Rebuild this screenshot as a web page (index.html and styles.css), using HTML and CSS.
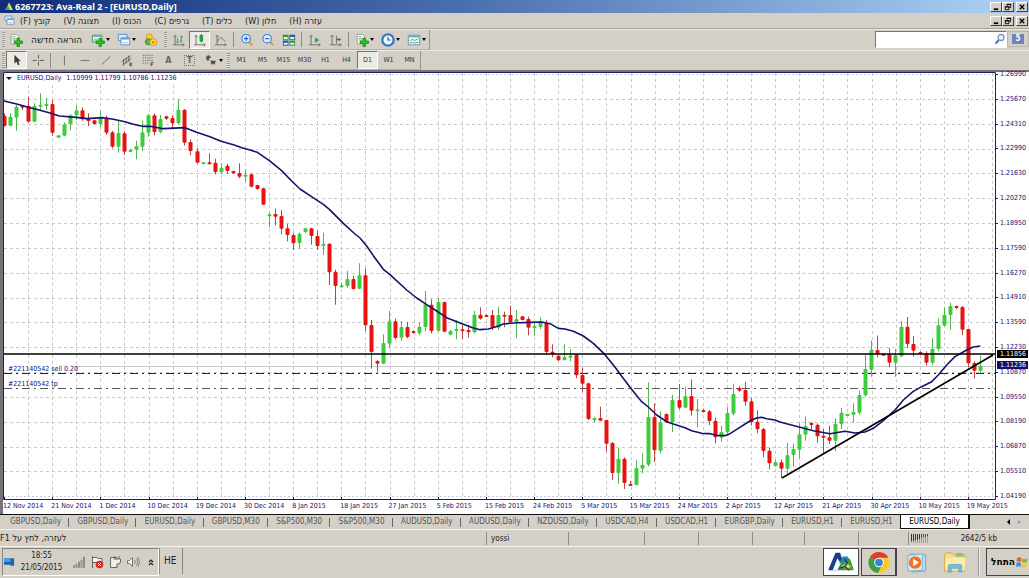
FILE: index.html
```html
<!DOCTYPE html>
<html lang="he">
<head>
<meta charset="utf-8">
<title>6267723: Ava-Real 2 - [EURUSD,Daily]</title>
<link rel="stylesheet" href="styles.css">
</head>
<body>
<svg class="defs" aria-hidden="true">
  <defs>
    <symbol id="plus" viewBox="0 0 8 8"><path d="M3 .5h2v2.500h2.500v2H5v2.500H3V5H.5V3H3z" fill="#2fc52f" stroke="#128a12" stroke-width=".7"/></symbol>
    <symbol id="i-new" viewBox="0 0 16 16"><path d="M2.500 1.500h6l2.500 2.500v8.500H2.500z" fill="#fff" stroke="#8a9a8a"/><path d="M4 4h3M4 6h5M4 8h4" stroke="#79a579"/><use href="#plus" x="5" y="5" width="11" height="11"/></symbol>
    <symbol id="i-chartplus" viewBox="0 0 16 16"><path d="M1.500 2.500h11v8h-11z" fill="#f2fff2" stroke="#3c8b50"/><path d="M2 3.500h10" stroke="#6fa8c8" stroke-width="2"/><path d="M3 7h5M3 9h4" stroke="#5bb06b"/><use href="#plus" x="5" y="5" width="11" height="11"/></symbol>
    <symbol id="i-windows" viewBox="0 0 16 16"><path d="M1.500 1.500h10v7h-10z" fill="#d8ecff" stroke="#4b88c2"/><path d="M4.500 5.500h10v8h-10z" fill="#fff" stroke="#4b88c2"/><path d="M5 6.500h9" stroke="#5fa4e0" stroke-width="2"/><path d="M6 11h7" stroke="#8ab6de"/></symbol>
    <symbol id="i-coins" viewBox="0 0 16 16"><circle cx="6" cy="4.500" r="3.500" fill="#f7d22c" stroke="#c49a10"/><circle cx="5" cy="10" r="3.500" fill="#59b24c" stroke="#358a32"/><circle cx="10.500" cy="10.500" r="4" fill="#fadb38" stroke="#c99d0c"/><circle cx="10.500" cy="10.500" r="1.500" fill="#c78f10"/></symbol>
    <symbol id="i-bars" viewBox="0 0 16 16"><path d="M3.500 3v10.500M1 13.500h13M2 4.500l1.500-2 1.500 2M12 12l2 1.500-2 1.500" fill="none" stroke="#686868"/><path d="M6.500 6v6M6.500 10.500H5M10.500 3v8M10.500 4.500h2M10.500 9.500H9" stroke="#23903a" fill="none"/></symbol>
    <symbol id="i-candle" viewBox="0 0 16 16"><path d="M3.500 3v10.500M1 13.500h13M2 4.500l1.500-2 1.500 2M12 12l2 1.500-2 1.500" fill="none" stroke="#686868"/><path d="M9.500 1v10" stroke="#118822"/><path d="M8 3h3v6H8z" fill="#1dbb39" stroke="#118822"/></symbol>
    <symbol id="i-line" viewBox="0 0 16 16"><path d="M3.500 3v10.500M1 13.500h13M2 4.500l1.500-2 1.500 2M12 12l2 1.500-2 1.500" fill="none" stroke="#686868"/><path d="M4 10c2-5 4-6 6-3l3 3" stroke="#23903a" fill="none"/></symbol>
    <symbol id="i-zoomin" viewBox="0 0 16 16"><path d="M10 10l4 4" stroke="#d3a22f" stroke-width="2.500"/><circle cx="7" cy="6.500" r="4.800" fill="#e3f1ff" stroke="#3c7fd0" stroke-width="1.300"/><path d="M7 4v5M4.500 6.500h5" stroke="#2263b8" stroke-width="1.300"/></symbol>
    <symbol id="i-zoomout" viewBox="0 0 16 16"><path d="M10 10l4 4" stroke="#d3a22f" stroke-width="2.500"/><circle cx="7" cy="6.500" r="4.800" fill="#e3f1ff" stroke="#3c7fd0" stroke-width="1.300"/><path d="M4.500 6.500h5" stroke="#2263b8" stroke-width="1.300"/></symbol>
    <symbol id="i-tile" viewBox="0 0 16 16"><path d="M1 2h6.500v6H1zM8.500 8.500H15v6H8.500z" fill="#2c9a35"/><path d="M8.500 2H15v6H8.500zM1 8.500h6.500v6H1z" fill="#2659a8"/><path d="M2 4.500h4.500V7H2zM9.500 4.500H14V7H9.500zM2 11h4.500v2.500H2zM9.500 11H14v2.500H9.500z" fill="#e4f4dd"/></symbol>
    <symbol id="i-scroll" viewBox="0 0 16 16"><path d="M3.500 3v10.500M1 13.500h13M2 4.500l1.500-2 1.500 2M12 12l2 1.500-2 1.500" fill="none" stroke="#686868"/><path d="M8 5l5 3-5 3z" fill="#26a53e"/></symbol>
    <symbol id="i-shift" viewBox="0 0 16 16"><path d="M3.500 3v10.500M1 13.500h13M2 4.500l1.500-2 1.500 2M12 12l2 1.500-2 1.500M8.500 3v9M9 7.500h5" fill="none" stroke="#686868"/><path d="M9 7.500l3-2v4z" fill="#555"/></symbol>
    <symbol id="i-clock" viewBox="0 0 16 16"><circle cx="8" cy="8" r="6.500" fill="#eef7ff" stroke="#2e78c6" stroke-width="2.600"/><path d="M8 4.500V8h3" fill="none" stroke="#234f8a" stroke-width="1.200"/></symbol>
    <symbol id="i-template" viewBox="0 0 16 16"><path d="M1.500 2.500h13v11h-13z" fill="#f3fff8" stroke="#558fa8"/><path d="M2 4h12" stroke="#68a9c6" stroke-width="2"/><path d="M3 8.500l3-1 3 1 4-2M3 11.500l3-1 3 1 4-1" fill="none" stroke="#3b9a67"/></symbol>
    <symbol id="i-arrow" viewBox="0 0 16 16"><path d="M5 2v10l2.500-2 1.500 4 2-1-1.500-3.500H12.500z" fill="#3d3d3d"/></symbol>
    <symbol id="i-cross" viewBox="0 0 16 16"><path d="M8.500 2v4.500M8.500 10v4.500M2 8.500h4.500M10 8.500h5" stroke="#555"/><path d="M8 8h1v1H8z" fill="#555"/></symbol>
    <symbol id="i-vline" viewBox="0 0 16 16"><path d="M8.500 3v11" stroke="#666"/></symbol>
    <symbol id="i-hline" viewBox="0 0 16 16"><path d="M3 8.500h10" stroke="#666"/></symbol>
    <symbol id="i-trend" viewBox="0 0 16 16"><path d="M3 13L13 4" stroke="#666"/></symbol>
    <symbol id="i-channel" viewBox="0 0 16 16"><path d="M2 10l10-7M3 14L13 6M4 7v7M7 5v7M10 3v7M11 11.500h3M11 14.500h3M11.500 11v4M11 13h2.500" stroke="#5c5c5c" fill="none"/></symbol>
    <symbol id="i-fibo" viewBox="0 0 16 16"><path d="M2 2.500h12M2 5.500h12M2 8.500h12M2 11.500h7" stroke="#666" stroke-dasharray="1.500 1"/><path d="M11.500 15v-4h3M11.500 13h2" stroke="#444" fill="none"/></symbol>
    <symbol id="i-arrows" viewBox="0 0 16 16"><path d="M2 5l3-2.500L8 5 6 5.500l-1 3-2-.500.500-2zM8 9h5l-1 4-1.500-1-2 1zM6 8l3 2" fill="#4e4e4e" stroke="#4e4e4e" stroke-width=".5"/></symbol>
    <symbol id="app" viewBox="0 0 10 9"><path d="M1 8L5 .5 9 8z" fill="#4da83d"/><path d="M5 .5L9 8H6L4 4z" fill="#e0d94a"/><path d="M1 8l2-3.500L5 8z" fill="#3b8fc9"/></symbol>
    <symbol id="ava" viewBox="0 0 30 24"><path d="M1 21L9 2h5l3 9-6 10z" fill="#1d3d86"/><path d="M6 21l5-13 4 6-4 7z" fill="#f6f8ff"/><path d="M11 21l8-15 6 3 4 12z" fill="#3f9a37"/><path d="M17 6l-4 8 6-2 5-3-2-3z" fill="#2586b0"/><path d="M15 17l6-4 5 4-4 3z" fill="#e2d742"/><path d="M19 9l3 4-3 4M13 19l6-2 5 4" fill="none" stroke="#183d7d" stroke-width="1.500"/></symbol>
  </defs>
</svg>

<header class="titlebar">
  <svg class="app-icon"><use href="#app"/></svg>
  <h1>6267723: Ava-Real 2 - [EURUSD,Daily]</h1>
  <div class="winbtns">
    <button aria-label="Minimize"><svg viewBox="0 0 11 9"><path d="M3 7h5" stroke="#000" stroke-width="2"/></svg></button>
    <button aria-label="Restore"><svg viewBox="0 0 11 9"><path d="M4.500 3V1.500h4V5H7M2.500 4h4v3.500h-4zM4 1.500h5M2 4.500h5" fill="none" stroke="#000"/></svg></button>
    <button class="close" aria-label="Close"><svg viewBox="0 0 11 9"><path d="M3 2l5 5M8 2L3 7" stroke="#000" stroke-width="1.500"/></svg></button>
  </div>
</header>

<nav class="menubar">
  <svg class="menu-icon"><use href="#i-windows"/></svg>
  <button dir="rtl">קובץ (F)</button>
  <button dir="rtl">תצוגה (V)</button>
  <button dir="rtl">הכנס (I)</button>
  <button dir="rtl">גרפים (C)</button>
  <button dir="rtl">כלים (T)</button>
  <button dir="rtl">חלון (W)</button>
  <button dir="rtl">עזרה (H)</button>
  <div class="winbtns">
    <button aria-label="Minimize chart"><svg viewBox="0 0 11 9"><path d="M3 7h5" stroke="#000" stroke-width="2"/></svg></button>
    <button aria-label="Restore chart"><svg viewBox="0 0 11 9"><path d="M4.500 3V1.500h4V5H7M2.500 4h4v3.500h-4zM4 1.500h5M2 4.500h5" fill="none" stroke="#000"/></svg></button>
    <button class="close" aria-label="Close chart"><svg viewBox="0 0 11 9"><path d="M3 2l5 5M8 2L3 7" stroke="#000" stroke-width="1.500"/></svg></button>
  </div>
</nav>

<div class="toolrow">
  <div class="toolbar">
    <i class="grip"></i>
    <button class="order"><svg><use href="#i-new"/></svg><span>הוראה חדשה</span></button>
    <button class="drop" aria-label="New chart"><svg><use href="#i-chartplus"/></svg></button>
    <button class="drop" aria-label="Profiles"><svg><use href="#i-windows"/></svg></button>
    <button class="tool wide" aria-label="Symbols"><svg><use href="#i-coins"/></svg></button>
    <i class="grip"></i>
    <button class="tool" aria-label="Bar chart"><svg><use href="#i-bars"/></svg></button>
    <button class="tool pressed" aria-label="Candlesticks"><svg><use href="#i-candle"/></svg></button>
    <button class="tool" aria-label="Line chart"><svg><use href="#i-line"/></svg></button>
    <i class="sep"></i>
    <button class="tool" aria-label="Zoom in"><svg><use href="#i-zoomin"/></svg></button>
    <button class="tool" aria-label="Zoom out"><svg><use href="#i-zoomout"/></svg></button>
    <button class="tool" aria-label="Tile windows"><svg><use href="#i-tile"/></svg></button>
    <i class="sep"></i>
    <button class="tool" aria-label="Auto scroll"><svg><use href="#i-scroll"/></svg></button>
    <button class="tool" aria-label="Chart shift"><svg><use href="#i-shift"/></svg></button>
    <i class="sep"></i>
    <button class="drop" aria-label="Indicators"><svg><use href="#i-new"/></svg></button>
    <button class="drop" aria-label="Periods"><svg><use href="#i-clock"/></svg></button>
    <button class="drop" aria-label="Templates"><svg><use href="#i-template"/></svg></button>
  </div>
  <div class="search">
    <input type="text" aria-label="Search">
    <svg viewBox="0 0 12 12"><path d="M5 7L1.500 10.500" stroke="#4a70b8" stroke-width="2"/><circle cx="7" cy="4.500" r="3" fill="#eef4ff" stroke="#7891cf" stroke-width="1.300"/></svg>
    <button class="chat"><span>5</span></button>
  </div>
</div>

<div class="toolrow second">
  <div class="toolbar">
    <i class="grip"></i>
    <button class="tool pressed" aria-label="Cursor"><svg><use href="#i-arrow"/></svg></button>
    <button class="tool" aria-label="Crosshair"><svg><use href="#i-cross"/></svg></button>
    <i class="sep"></i>
    <button class="tool" aria-label="Vertical line"><svg><use href="#i-vline"/></svg></button>
    <button class="tool" aria-label="Horizontal line"><svg><use href="#i-hline"/></svg></button>
    <button class="tool" aria-label="Trendline"><svg><use href="#i-trend"/></svg></button>
    <button class="tool" aria-label="Channel"><svg><use href="#i-channel"/></svg></button>
    <button class="tool" aria-label="Fibonacci"><svg><use href="#i-fibo"/></svg></button>
    <button class="tool letter">A</button>
    <button class="tool letter"><span class="label-t">T</span></button>
    <button class="drop" aria-label="Arrows"><svg><use href="#i-arrows"/></svg></button>
    <i class="grip"></i>
    <button class="tool">M1</button>
    <button class="tool">M5</button>
    <button class="tool">M15</button>
    <button class="tool">M30</button>
    <button class="tool">H1</button>
    <button class="tool">H4</button>
    <button class="tool pressed">D1</button>
    <button class="tool">W1</button>
    <button class="tool">MN</button>
  </div>
</div>

<main class="chart">
  <div class="plot">
    <svg id="plot" viewBox="3 72 993 428" preserveAspectRatio="none" role="img" aria-label="EURUSD daily candlesticks"></svg>
    <p class="quote"><b></b><span>EURUSD,Daily</span><span>1.10999 1.11799 1.10786 1.11236</span></p>
    <p class="order-label sell">#221140542 sell 0.20</p>
    <p class="order-label tp">#221140542 tp</p>
  </div>
  <div class="prices">
    <span>1.26990</span><span>1.25670</span><span>1.24310</span><span>1.22990</span><span>1.21630</span><span>1.20270</span>
    <span>1.18950</span><span>1.17590</span><span>1.16270</span><span>1.14910</span><span>1.13590</span><span>1.12230</span>
    <span>1.10870</span><span>1.09550</span><span>1.08190</span><span>1.06870</span><span>1.05510</span><span>1.04190</span>
    <strong class="tag level">1.11856</strong>
    <strong class="tag bid">1.11236</strong>
  </div>
  <div class="dates">
    <span>12 Nov 2014</span><span>21 Nov 2014</span><span>1 Dec 2014</span><span>10 Dec 2014</span><span>19 Dec 2014</span><span>30 Dec 2014</span><span>8 Jan 2015</span>
    <span>18 Jan 2015</span><span>27 Jan 2015</span><span>5 Feb 2015</span><span>15 Feb 2015</span><span>24 Feb 2015</span><span>5 Mar 2015</span><span>15 Mar 2015</span>
    <span>24 Mar 2015</span><span>2 Apr 2015</span><span>12 Apr 2015</span><span>21 Apr 2015</span><span>30 Apr 2015</span><span>10 May 2015</span><span>19 May 2015</span>
  </div>
</main>

<nav class="tabs">
  <button>GBPUSD,Daily</button><button>GBPUSD,Daily</button><button>EURUSD,Daily</button><button>GBPUSD,M30</button><button>S&amp;P500,M30</button>
  <button>S&amp;P500,M30</button><button>AUDUSD,Daily</button><button>AUDUSD,Daily</button><button>NZDUSD,Daily</button><button>USDCAD,H4</button>
  <button>USDCAD,H1</button><button>EURGBP,Daily</button><button>EURUSD,H1</button><button>EURUSD,H1</button><button class="active">EURUSD,Daily</button>
  <div class="scroll"><button aria-label="Scroll left"></button><button aria-label="Scroll right" disabled></button></div>
</nav>

<div class="status">
  <span class="help" dir="rtl">לעזרה, לחץ על F1</span>
  <span>yossi</span><span></span><span></span><span></span><span></span><span></span><span></span>
  <span class="traffic">
    <svg viewBox="0 0 18 9"><path d="M.5 0v9M2.500 0v9M4.500 0v9M6.500 0v9M8.500 0v9" stroke="#1f4038"/><path d="M10.500 0v9M12.500 0v9M14.500 0v9M16.500 0v9" stroke="#1f5c80"/><path d="M.5 7v2M2.500 7v2M4.500 6v3M6.500 6v3M8.500 5v4M10.500 4v5M12.500 3v6M14.500 3v6M16.500 2v7" stroke="#a0b82c"/></svg>
    <em>2642/5 kb</em>
  </span>
</div>

<footer class="taskbar">
  <div class="tray">
    <svg class="desk" viewBox="0 0 12 10"><path d="M0 1h11v7H0z" fill="#1c62b5"/><path d="M0 1h7v4H0z" fill="#4a9be8"/><path d="M7 8h4v1H7z" fill="#243f66"/></svg>
    <time>18:55<br>21/05/2015</time>
    <svg viewBox="0 0 14 14"><path d="M1.500 12.500v-2h1v2zM4 12.500V9h1v3.500zM6.500 12.500V7h1v5.500zM9 12.500V5h1v7.500zM11.500 12.500V2h1v10.500z" fill="#eee" stroke="#777" stroke-width=".8"/></svg>
    <svg viewBox="0 0 14 14"><path d="M2.500 1v12M3 2.500h4l1 1h4v5H8l-1-1H3" fill="#f3f3f3" stroke="#666"/><circle cx="9.500" cy="9.500" r="3.800" fill="#d62b2b"/><path d="M8 8l3 3M11 8l-3 3" stroke="#fff"/></svg>
    <svg viewBox="0 0 14 14"><path d="M2.500 2.500h6v10h-6z" fill="#eee" stroke="#666"/><path d="M7 1v3M11 1v3M5.500 4h7v3L11 9H9v4" fill="#eee" stroke="#666"/></svg>
    <svg viewBox="0 0 14 14"><path d="M1.500 5.500h2l3-3v9l-3-3h-2z" fill="#eee" stroke="#777"/><path d="M8.500 5q1.500 2 0 4M10.500 3.500q2.500 3.500 0 7M12 2q3 5 0 10" fill="none" stroke="#888"/></svg>
    <svg viewBox="0 0 14 14"><path d="M5 7l2-2 2 2M5 10l2-2 2 2" fill="none" stroke="#222" stroke-width="1.200"/></svg>
  </div>
  <div class="lang">HE</div>
  <div class="apps">
    <button class="app current" aria-label="Ava"><svg viewBox="0 0 30 24"><use href="#ava"/></svg></button>
    <button class="app open" aria-label="Chrome"><svg viewBox="0 0 24 24"><circle cx="12" cy="12" r="11" fill="#fbc926"/><path d="M12 12L2.500 6.500A11 11 0 0 1 21.800 7H12z" fill="#dc3e30"/><path d="M2.500 6.500A11 11 0 0 0 11 23l4-8-3-3z" fill="#35a24a"/><circle cx="12" cy="12" r="5" fill="#fff"/><circle cx="12" cy="12" r="4" fill="#3b7fd6"/></svg></button>
    <button class="app" aria-label="Media Player"><svg viewBox="0 0 24 24"><path d="M5 3l16 1v17l-14 1z" fill="#b5dcf2" stroke="#6ba9cf"/><path d="M2.500 4.500l15-1.500v17l-15 1z" fill="#d6ecf8" stroke="#77b1d3"/><circle cx="10" cy="12" r="6.500" fill="#ee7421"/><path d="M8 8l6 4-6 4z" fill="#fff"/></svg></button>
    <button class="app" aria-label="Explorer"><svg viewBox="0 0 24 24"><path d="M1 4l2-2h6l2 2h11v17H1z" fill="#f6dc83" stroke="#cfae50"/><path d="M13 2h7l1 4h-8z" fill="#8cc672"/><path d="M2 7h21l-1 13H2z" fill="#fbebac"/><path d="M5 22v-6q0-2 2-2h10q2 0 2 2v6h-3v-4H8v4z" fill="#75bce3" stroke="#4b97c4" stroke-width=".7"/></svg></button>
  </div>
  <button class="start"><span>התחל</span><svg viewBox="0 0 12 12"><path d="M1 2q2-1.500 4.500 0L5 6Q3 4.500.5 6z" fill="#e9602b"/><path d="M6.500 2.500Q9 4 11.500 2.500L11 6Q8.500 7.500 6 6z" fill="#7cba3c"/><path d="M.5 7Q3 5.500 5 7l-.500 4Q2.500 9.500 0 11z" fill="#3b8fdd"/><path d="M6 7.500Q8.500 9 11 7.500l-.500 3.500Q8 12.500 5.500 11z" fill="#f7c72c"/></svg></button>
</footer>
<script src="chart.js"></script>
</body>
</html>
```
FILE: styles.css
```css
* { box-sizing: border-box; }

body {
  margin: 0;
  min-height: 100vh;
  display: flex;
  flex-direction: column;
  background: #d4d0c8;
  color: #222;
  font: 8px/10px "DejaVu Sans Condensed", "DejaVu Sans", sans-serif;
  overflow-x: hidden;
}

h1, p { margin: 0; }

button {
  padding: 0;
  border: 0;
  background: none;
  color: inherit;
  font: inherit;
}

svg { display: block; flex: none; }
.defs { position: absolute; width: 0; height: 0; }

.titlebar {
  display: flex;
  align-items: center;
  height: 13px;
  padding-left: 4px;
  background: linear-gradient(90deg, #0f2e78, #4a6fae 45%, #a6caf0 95%);
  color: #fff;
}
.titlebar h1 { font: bold 9px/13px "Noto Sans", sans-serif; }
.app-icon { width: 10px; height: 9px; margin-right: 1px; }

.winbtns { display: flex; margin-left: auto; }
.winbtns button {
  width: 12px;
  height: 10px;
  background: #d4d0c8;
  border: 1px solid;
  border-color: #fff #404040 #404040 #fff;
}
.winbtns .close { margin: 0 1px 0 2px; }
.winbtns svg { width: 10px; height: 8px; }

.menubar {
  display: flex;
  align-items: center;
  gap: 13px;
  height: 16px;
  padding-left: 4px;
  border-bottom: 1px solid #aaa69e;
  font-size: 9px;
}
.menu-icon { width: 11px; height: 11px; margin-right: -8px; }

.toolrow {
  display: flex;
  justify-content: space-between;
  height: 21px;
  border-top: 1px solid #eceae5;
}
.toolrow.second { height: 20px; }
.toolbar {
  display: flex;
  align-items: center;
  padding-left: 1px;
  border-right: 1px solid #9b978f;
  border-bottom: 1px solid #b4b0a8;
}
.grip {
  width: 3px;
  height: 15px;
  margin: 0 1px;
  background: repeating-linear-gradient(#98948c 0 1px, #e8e6e0 1px 2px);
}
.sep { width: 1px; height: 15px; margin: 0 2px; background: #918d85; }
.tool {
  display: flex;
  align-items: center;
  justify-content: center;
  width: 21px;
  height: 18px;
  color: #333;
  font-size: 7px;
}
.tool.wide { width: 24px; }
.tool.letter { font-size: 9px; font-weight: bold; color: #666; }
.toolbar svg { width: 14px; height: 14px; }
.label-t { border: 1px dotted #777; padding: 0 2px; line-height: 9px; }
.pressed {
  background: #eceae5;
  border: 1px solid;
  border-color: #77736b #fff #fff #77736b;
}
.order { display: flex; align-items: center; gap: 8px; padding: 0 5px 0 3px; font-size: 10px; }
.drop { display: flex; align-items: center; justify-content: center; gap: 1px; width: 26px; }
.drop::after {
  content: "";
  border: 2px solid transparent;
  border-top: 3px solid #000;
  border-bottom: 0;
}

.search { display: flex; height: 18px; position: relative; }
.search input {
  width: 132px;
  height: 17px;
  margin-top: 1px;
  border: 1px solid;
  border-color: #77736b #fff #fff #77736b;
  background: #fff;
}
.search > svg { position: absolute; right: 23px; top: 3px; width: 12px; height: 12px; }
.chat { width: 22px; border: 1px solid #bbb7af; margin: 1px 0; }
.chat span {
  display: block;
  width: 12px;
  margin: 0 auto;
  background: #6d84b5;
  color: #fff;
  font-weight: bold;
}

.chart {
  flex: 1;
  display: grid;
  grid-template-columns: 1fr 33px;
  grid-template-rows: 1fr 14px;
  border: solid #77737b;
  border-width: 2px 0 0 3px;
  background: #fff;
  color: #101078;
  font-size: 7px;
}
.plot { position: relative; min-height: 0; }
#plot { position: absolute; width: 100%; height: 100%; }
#plot path { fill: none; vector-effect: non-scaling-stroke; }
#plot .grid { stroke: #cacaca; stroke-dasharray: 3 3; }
#plot .edge { stroke: #c9c9ea; stroke-dasharray: 2 2; }
#plot .frame { stroke: #28204c; stroke-width: 1; }
#plot .level { stroke: #000; stroke-width: 1.6; }
#plot .bid { stroke: #c8c8c8; }
#plot .sell { stroke: #222; stroke-dasharray: 8 4 2 4; }
#plot .tp { stroke: #555; stroke-dasharray: 8 4 2 4; }
#plot .average { stroke: #13136c; stroke-width: 1.6; stroke-linejoin: round; }
#plot .up { fill: #3ecb3e; stroke: #3ecb3e; }
#plot .down { fill: #e81212; stroke: #e81212; }
#plot .body { stroke-width: 2; stroke-linejoin: round; }
#plot .up.wick { stroke: #55b255; }
#plot .down.wick { stroke: #bb4646; }

.quote {
  position: absolute;
  left: 3px;
  top: 2px;
  display: flex;
  align-items: center;
  gap: 5px;
  padding-right: 2px;
  background: #fff;
  line-height: 9px;
}
.quote b { border: 3px solid transparent; border-top: 3px solid #111155; border-bottom: 0; }
.order-label { position: absolute; left: 5px; line-height: 8px; }
.order-label.sell { top: 68.500%; }
.order-label.tp { top: 72%; }

.prices {
  position: relative;
  display: flex;
  flex-direction: column;
  justify-content: space-between;
  padding-bottom: 1px;
  line-height: 5px;
}
.prices span { display: flex; align-items: center; gap: 2px; }
.prices span::before { content: ""; width: 2px; height: 1px; background: #28204c; }
.tag {
  position: absolute;
  left: 1px;
  right: 1px;
  padding-left: 3px;
  line-height: 8px;
  font-weight: normal;
  color: #fff;
}
.tag.level { top: 65%; background: #000; }
.tag.bid { top: 67.600%; background: #10106c; }

.dates {
  grid-column: 1 / -1;
  display: grid;
  grid-template-columns: repeat(21, minmax(0, 1fr));
  padding-right: 14px;
  line-height: 13px;
  white-space: nowrap;
}

.tabs {
  display: flex;
  height: 15px;
  padding-left: 2px;
  border-top: 1px solid #111;
  color: #555;
}
.tabs > button {
  flex: 1 1 auto;
  padding: 0 7px;
  background: linear-gradient(#666, #666) right 3px / 1px 9px no-repeat;
}
.tabs > .active {
  margin-left: -1px;
  border: solid #111;
  border-width: 0 2px 1px 1px;
  background: #fff;
  color: #000;
}
.scroll { display: flex; align-items: center; justify-content: flex-end; gap: 8px; width: 59px; padding-right: 8px; }
.scroll button { border: 3px solid transparent; border-right: 3px solid #000; border-left: 0; }
.scroll button:disabled { border: 2px solid transparent; border-left: 3px solid #999; border-right: 0; }

.status {
  display: grid;
  grid-template-columns: 486fr 82fr 76fr 54fr 54fr 52fr 54fr 50fr 121fr;
  height: 18px;
  padding: 2px 0;
  border-top: 1px solid #f3f2ee;
  border-bottom: 1px solid #f3f2ee;
  line-height: 13px;
}
.status > span { padding-left: 4px; border-left: 1px solid #918d85; }
.status > .help { padding: 0; border: 0; text-align: left; font-size: 9px; direction: rtl; }
.status > .traffic { display: flex; align-items: center; justify-content: space-between; padding: 0 32px 0 2px; }
.traffic svg { width: 18px; height: 9px; }
.traffic em { font-style: normal; }

.taskbar { display: flex; align-items: flex-start; height: 31px; padding-top: 1px; }
.tray {
  display: flex;
  align-items: center;
  gap: 4px;
  height: 28px;
  margin-left: 2px;
  padding-left: 1px;
  border: 1px solid;
  border-color: #8a867e #fff #fff #8a867e;
}
.tray svg { width: 14px; height: 14px; }
.tray .desk { width: 11px; height: 10px; }
.tray time { width: 45px; margin-right: 4px; text-align: center; line-height: 12px; }
.lang {
  height: 26px;
  padding: 0 6px 0 4px;
  border: solid #8a867e;
  border-width: 0 1px;
  font-size: 10px;
  line-height: 26px;
}
.apps {
  display: flex;
  gap: 2px;
  margin-left: auto;
  padding-right: 5px;
  border-right: 2px groove #eee;
}
.app { display: flex; align-items: center; justify-content: center; width: 36px; height: 28px; }
.app svg { width: 24px; height: 23px; }
.app.current { background: #fff; border: 1px solid #444; }
.app.current svg { width: 30px; height: 22px; }
.app.open { border: 1px solid #444; border-width: 1px 2px 1px 1px; }
.start {
  display: flex;
  align-items: center;
  justify-content: flex-end;
  gap: 1px;
  width: 43px;
  height: 28px;
  margin-left: 6px;
  padding-right: 1px;
  border: 1px solid #444;
  border-right: 0;
  font-size: 10px;
  font-weight: bold;
  color: #000;
}
.start svg { width: 12px; height: 12px; }
```
FILE: chart.js
```js
// Each bar: direction (1 up, 0 down), high, low, body top, body bottom.
// Heights are in thirds of a plot unit, counted from the segment's base.
const segments = [
  { base: 70, bars: [
    [0,130,170,137,168],[1,130,168,140,167],[1,105,182,110,143],[0,105,120,107,113],[0,80,157,107,155],[1,100,157,108,155],
    [1,70,120,104,109],[1,83,120,102,104],[0,90,197,102,188],[1,195,204,196,203],[1,157,199,163,197],[1,133,181,136,163],
    [1,106,150,121,136],[0,112,152,121,148],[0,130,168,147,153],[0,149,164,151,162],[1,122,172,143,162],[0,137,195,143,188],
    [0,183,235,187,230],[1,152,248,189,230],[0,184,255,190,245],[1,236,247,240,245],[1,212,268,228,239],[1,152,243,187,230],
    [1,132,200,136,188],[0,130,196,136,186],[1,135,190,147,186],[0,137,150,139,146],[0,137,175,144,160],[1,87,163,119,160],
    [0,118,227,119,218],[0,208,256,216,243],[0,235,280,244,278],[1,277,281,277,280],[0,250,283,277,281],[0,266,313,278,306],
    [1,280,312,293,307],[0,281,312,287,303],[0,302,312,303,310],[0,280,325,309,320]] },
  { base: 120, bars: [
    [1,147,185,164,170],[0,160,202,163,200],[0,194,210,195,207],[0,203,255,205,254],[1,278,322,283,287],[0,266,316,282,290],
    [0,270,343,288,326],[0,312,364,325,345],[0,338,390,345,370],[1,338,386,341,369],[1,323,340,325,336],[0,323,374,325,348],
    [0,332,390,348,378],[1,338,405,372,377],[0,369,495,371,457],[0,449,554,455,498],[1,488,503,496,500],[1,453,503,477,498],
    [0,467,509,477,507],[1,430,508,466,506],[0,445,633,466,616],[0,600,746,615,696],[0,720,755,723,731],[1,643,733,669,731],
    [1,573,685,604,671],[0,596,658,604,654],[1,603,662,621,653],[0,606,655,621,651],[0,631,641,633,639],[1,608,645,620,640],
    [1,513,634,553,621],[0,538,640,554,633],[1,534,635,546,632],[0,545,636,546,635],[1,630,646,633,644],[1,600,658,627,633],
    [0,615,657,628,633],[0,615,653,630,637],[1,573,640,584,637],[0,562,599,584,596],[0,584,589,585,588],[0,570,630,585,622]] },
  { base: 270, bars: [
    [1,110,180,135,173],[0,125,172,134,138],[0,107,160,135,157],[1,120,205,147,156],[0,138,151,139,150],[0,140,196,147,173],
    [1,157,197,168,173],[1,142,178,155,171],[0,150,254,158,246],[0,223,262,245,253],[0,255,273,257,271],[1,223,272,261,270],
    [1,238,274,257,262],[0,252,325,254,316],[0,293,365,315,341],[0,338,450,340,447],[1,442,457,444,451],[0,410,454,444,452],
    [0,449,545,450,521],[0,516,630,519,609],[1,534,641,566,609],[0,562,657,566,639]] },
  { base: 350, bars: [
    [0,393,407,402,406],[1,330,406,354,405],[1,310,370,344,356],[1,97,350,201,344],[0,160,336,201,301],[1,184,310,217,302],
    [0,190,219,192,217],[1,134,246,150,217],[0,102,178,150,173],[1,110,175,139,173],[0,88,197,138,182],[1,147,232,178,182],
    [0,176,188,180,185],[0,180,225,184,213],[0,203,280,212,262],[1,227,275,246,263],[1,170,250,189,247],[1,101,196,132,191],
    [0,109,125,114,122],[0,96,168,120,155],[0,143,227,154,217],[0,181,250,215,238],[0,234,322,237,303],[0,293,358,302,340],
    [1,330,350,337,348],[0,328,384,337,356],[1,279,375,315,356],[1,281,350,297,315],[1,220,325,253,299],[1,200,272,228,254]] },
  { base: 280, bars: [
    [0,426,448,429,434],[0,430,488,434,469],[0,447,518,467,472],[0,437,492,472,482],[1,415,513,431,482],[1,384,447,398,432],
    [1,401,405,402,404],[1,370,428,396,404],[1,332,404,345,398],[1,225,350,267,346],[1,182,290,209,269],[0,167,232,210,223],
    [0,220,226,221,225],[0,204,262,222,248],[1,207,290,226,248],[1,123,232,140,229],[0,111,204,140,192],[0,168,230,192,212],
    [0,214,223,216,222],[0,214,257,219,248],[1,175,254,206,248],[1,115,214,136,207],[1,83,139,104,137],[1,68,150,78,105],
    [0,77,88,78,84],[0,78,165,81,149],[0,146,262,147,250],[0,244,295,249,272],[1,227,280,257,272]] }
];

// Moving average, as [left, top, points in thirds of a unit].
const average = [
  [0, 70, [[12,93],[50,102],[85,112],[120,121],[150,129],[178,138],[229,142],[260,146],[310,143],[340,148],[375,155],[400,163],[427,169],[450,169],[490,176],[555,173],[590,187],[630,200],[663,214],[700,224],[720,231]]],
  [240, 120, [[0,82],[30,90],[52,97],[88,122],[124,151],[155,183],[180,207],[210,227],[250,253],[268,268],[310,310],[345,342],[360,354],[380,378],[400,407],[430,448],[450,464],[500,510],[530,534],[560,554],[590,573],[620,593],[660,609],[700,624],[720,629],[745,627]]],
  [430, 270, [[205,168],[220,162],[250,159],[300,157],[335,156],[360,161],[385,175],[405,177],[430,184],[460,198],[490,220],[525,254],[560,298]]],
  [610, 350, [[30,72],[60,112],[95,155],[115,171],[140,195],[170,215],[190,222],[225,233],[245,242],[275,250],[300,251],[320,256],[345,257],[360,251],[385,235],[410,219],[425,210],[440,204],[455,202],[470,206],[495,210]]],
  [780, 280, [[0,426],[60,442],[100,452],[150,461],[195,454],[225,459],[255,456],[280,445],[310,422],[345,390],[370,360],[400,334],[425,320],[455,305],[475,285],[500,255],[525,230],[560,210],[580,201],[601,198]]]
];

const svg = document.getElementById("plot");
const add = (name, d) => {
  const path = document.createElementNS("http://www.w3.org/2000/svg", "path");
  path.setAttribute("class", name);
  path.setAttribute("d", d);
  svg.append(path);
};

let grid = "";
for (let i = 0; i <= 40; i++) grid += `M${Math.round(28 + i * 24.1) + 0.5} 73V499`;
for (let i = 1; i < 17; i++) grid += `M4 ${Math.round(74 + i * 24.84) + 0.5}H995`;
add("grid", grid);
add("edge", "M4 74.5H995M4 496.5H995");
add("bid", "M76 366.5H995");
add("sell", "M4 373.5H995");
add("tp", "M4 388.5H995");

const wick = ["", ""];
const body = ["", ""];
let index = 0;
for (const { base, bars } of segments) {
  for (const [up, high, low, top, bottom] of bars) {
    const x = Math.round(3.7 + index * 6.025) + 0.5;
    const y = v => base + v / 3;
    wick[up] += `M${x} ${y(high)}V${y(low)}`;
    const t = y(top) + 1;
    const b = Math.max(t, y(bottom) - 1);
    body[up] += `M${x - 1} ${t}H${x + 1}V${b}H${x - 1}Z`;
    index++;
  }
}
add("up wick", wick[1]);
add("down wick", wick[0]);
add("up body", body[1]);
add("down body", body[0]);

const points = average.flatMap(([left, top, list]) => list.map(([x, y]) => `${left + x / 3} ${top + y / 3}`));
add("average", "M" + points.join("L"));
add("level", "M4 354H995M782 478L993 355");
let ticks = "";
for (let i = 0; i <= 20; i++) ticks += `M${Math.round(4 + i * 48.2) + 0.5} 497V500`;
add("frame", "M3.500 72.500H995.500V499.500H3.500Z" + ticks);
```
